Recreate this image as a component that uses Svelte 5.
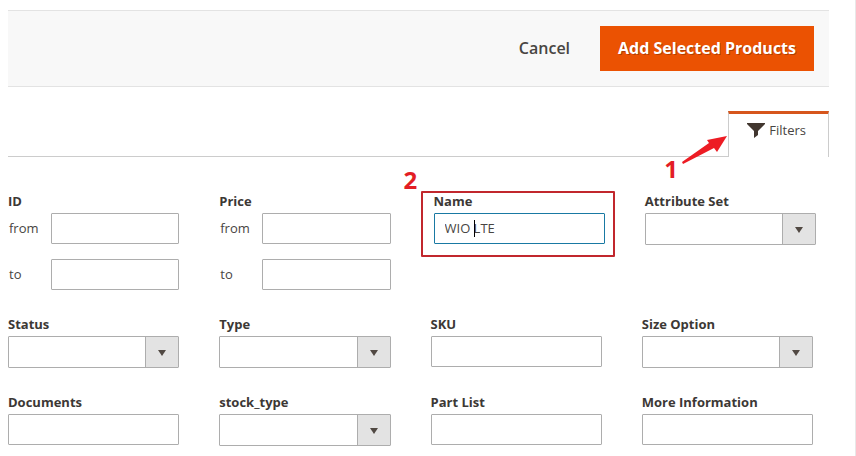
<script>
  const rows = [
    [
      [
        { id: 'id', label: 'ID', kind: 'range' },
        { id: 'price', label: 'Price', kind: 'range' }
      ],
      [
        { id: 'name', label: 'Name', kind: 'text', value: 'WIO LTE', marked: true },
        { id: 'attribute-set', label: 'Attribute Set', kind: 'select' }
      ]
    ],
    [
      [
        { id: 'status', label: 'Status', kind: 'select' },
        { id: 'type', label: 'Type', kind: 'select' }
      ],
      [
        { id: 'sku', label: 'SKU', kind: 'text' },
        { id: 'size-option', label: 'Size Option', kind: 'select' }
      ]
    ],
    [
      [
        { id: 'documents', label: 'Documents', kind: 'text' },
        { id: 'stock-type', label: 'stock_type', kind: 'select' }
      ],
      [
        { id: 'part-list', label: 'Part List', kind: 'text' },
        { id: 'more-information', label: 'More Information', kind: 'text' }
      ]
    ]
  ];
</script>

<div class="modal">
  <header class="actions">
    <button type="button" class="cancel">Cancel</button>
    <button type="button" class="primary">Add Selected Products</button>
  </header>

  <div class="toolbar">
    <button type="button" class="tab">
      <svg class="funnel" width="18" height="15" viewBox="0 0 18 15" aria-hidden="true">
        <path d="M0 0H18V1L11 8V12L7 15V8L0 1Z" fill="#41362f" />
      </svg>
      <span>Filters</span>
    </button>
    <div class="step-one">
      <span class="number">1</span>
      <svg width="48" height="32" viewBox="0 0 48 32" aria-hidden="true">
        <path d="M2 29L29 10L27 7L47 3L37 19L34 15L3 31Z" fill="#ed1c24" />
      </svg>
    </div>
  </div>

  <form class="filters">
    {#each rows as row, index}
      <div class="row" class:wide={index === 0}>
        {#each row as pair}
          <div class="pair">
            {#each pair as field}
              {#if field.kind === 'range'}
                <fieldset class="field">
                  <legend class="label">{field.label}</legend>
                  <div class="range">
                    {#each ['from', 'to'] as bound}
                      <div class="bound">
                        <label for="{field.id}-{bound}">{bound}</label>
                        <input id="{field.id}-{bound}" type="text" />
                      </div>
                    {/each}
                  </div>
                </fieldset>
              {:else}
                <div class="field" class:marked={field.marked}>
                  <label class="label" for={field.id}>{field.label}</label>
                  {#if field.kind === 'select'}
                    <div class="select">
                      <select id={field.id}><option value=""></option></select>
                      <span class="arrow"></span>
                    </div>
                  {:else}
                    <input id={field.id} type="text" value={field.value ?? ''} class:active={field.marked} />
                  {/if}
                  {#if field.marked}
                    <span class="caret"></span>
                    <span class="outline"></span>
                    <span class="number step-two">2</span>
                  {/if}
                </div>
              {/if}
            {/each}
          </div>
        {/each}
      </div>
    {/each}
  </form>
</div>

<style>
  :global(body) {
    margin: 0;
    background: #fff;
  }

  .modal,
  .modal :is(button, input, select) {
    box-sizing: border-box;
    font-family: 'Open Sans', 'Noto Sans', sans-serif;
    color: #484542;
  }

  .modal {
    min-height: 100vh;
    padding: 10px 26px 10px 8px;
    border-right: 1px solid #e8e8e8;
    font-size: 13px;
  }

  .actions {
    display: flex;
    justify-content: flex-end;
    align-items: center;
    gap: 12px;
    padding: 15px;
    border-top: 1px solid #e3e3e3;
    border-bottom: 1px solid #e3e3e3;
    background: #f8f8f8;
  }

  .actions button {
    height: 45px;
    padding: 0 18px 2px;
    border: 0;
    font-size: 16px;
    font-weight: 600;
  }

  .actions .cancel {
    background: none;
  }

  .actions .primary {
    background: #eb5202;
    color: #fff;
    font-weight: 700;
    text-shadow: 1px 1px 0 rgba(0, 0, 0, 0.25);
  }

  .toolbar {
    position: relative;
    display: flex;
    justify-content: flex-end;
    margin-top: 24px;
    box-shadow: inset 0 -1px #ccc;
  }

  .tab {
    display: flex;
    justify-content: center;
    align-items: flex-start;
    gap: 4px;
    height: 46px;
    padding: 6px 22px 0 18px;
    border: 1px solid #ccc;
    border-top: 3px solid #d6561c;
    border-bottom: 0;
    background: #fff;
    font-size: 13px;
    line-height: 20px;
  }

  .funnel {
    margin-top: 3px;
  }

  .number {
    font-size: 24px;
    font-weight: 700;
    line-height: 24px;
    color: #e31e25;
  }

  .step-one {
    position: absolute;
    top: 22px;
    right: 101px;
    display: flex;
    gap: 2px;
  }

  .step-one .number {
    padding-top: 24px;
  }

  .filters {
    display: flex;
    flex-direction: column;
    gap: 25px;
    margin-top: 35px;
  }

  .row {
    display: grid;
    grid-template-columns: 1fr 1fr;
    gap: 40px;
    padding-right: 16px;
  }

  .row.wide {
    gap: 43px;
    padding-right: 13px;
  }

  .pair {
    display: grid;
    grid-template-columns: 1fr 1fr;
    gap: 40px;
    align-items: start;
  }

  .field {
    position: relative;
    min-width: 0;
    margin: 0;
    padding: 0;
    border: 0;
  }

  .label {
    display: block;
    padding: 0 0 3px;
    font-weight: 700;
    line-height: 18px;
    color: #3c3835;
  }

  input {
    display: block;
    width: 100%;
    height: 31px;
    padding: 0 10px 2px;
    border: 1px solid #adadad;
    border-radius: 1px;
    background: #fff;
    font-size: 13px;
  }

  input.active {
    border-color: #1979a3;
  }

  .range {
    display: grid;
    gap: 15px;
  }

  .bound {
    display: grid;
    grid-template-columns: 43px 1fr;
    align-items: center;
  }

  .bound label {
    padding: 0 0 2px 1px;
  }

  .select {
    position: relative;
  }

  select {
    display: block;
    width: 100%;
    height: 32px;
    padding: 0 42px 0 10px;
    border: 1px solid #adadad;
    border-radius: 1px;
    appearance: none;
    background: #fff;
    font-size: 13px;
  }

  .arrow {
    position: absolute;
    top: 1px;
    right: 1px;
    bottom: 1px;
    display: grid;
    place-items: center;
    width: 32px;
    border-left: 1px solid #adadad;
    background: #e3e3e3;
    pointer-events: none;
  }

  .arrow::before {
    content: '';
    margin-top: 2px;
    border: 4px solid transparent;
    border-top: 6px solid #514943;
    border-bottom: 0;
  }

  .caret {
    position: absolute;
    top: 28px;
    left: 40px;
    width: 1px;
    height: 17px;
    background: #000;
  }

  .outline {
    position: absolute;
    inset: -1px -10px -13px -13px;
    border: 2px solid #c1272d;
    border-radius: 1px;
    pointer-events: none;
  }

  .marked {
    height: 52px;
  }

  .step-two {
    position: absolute;
    top: -24px;
    left: -30px;
  }
</style>
